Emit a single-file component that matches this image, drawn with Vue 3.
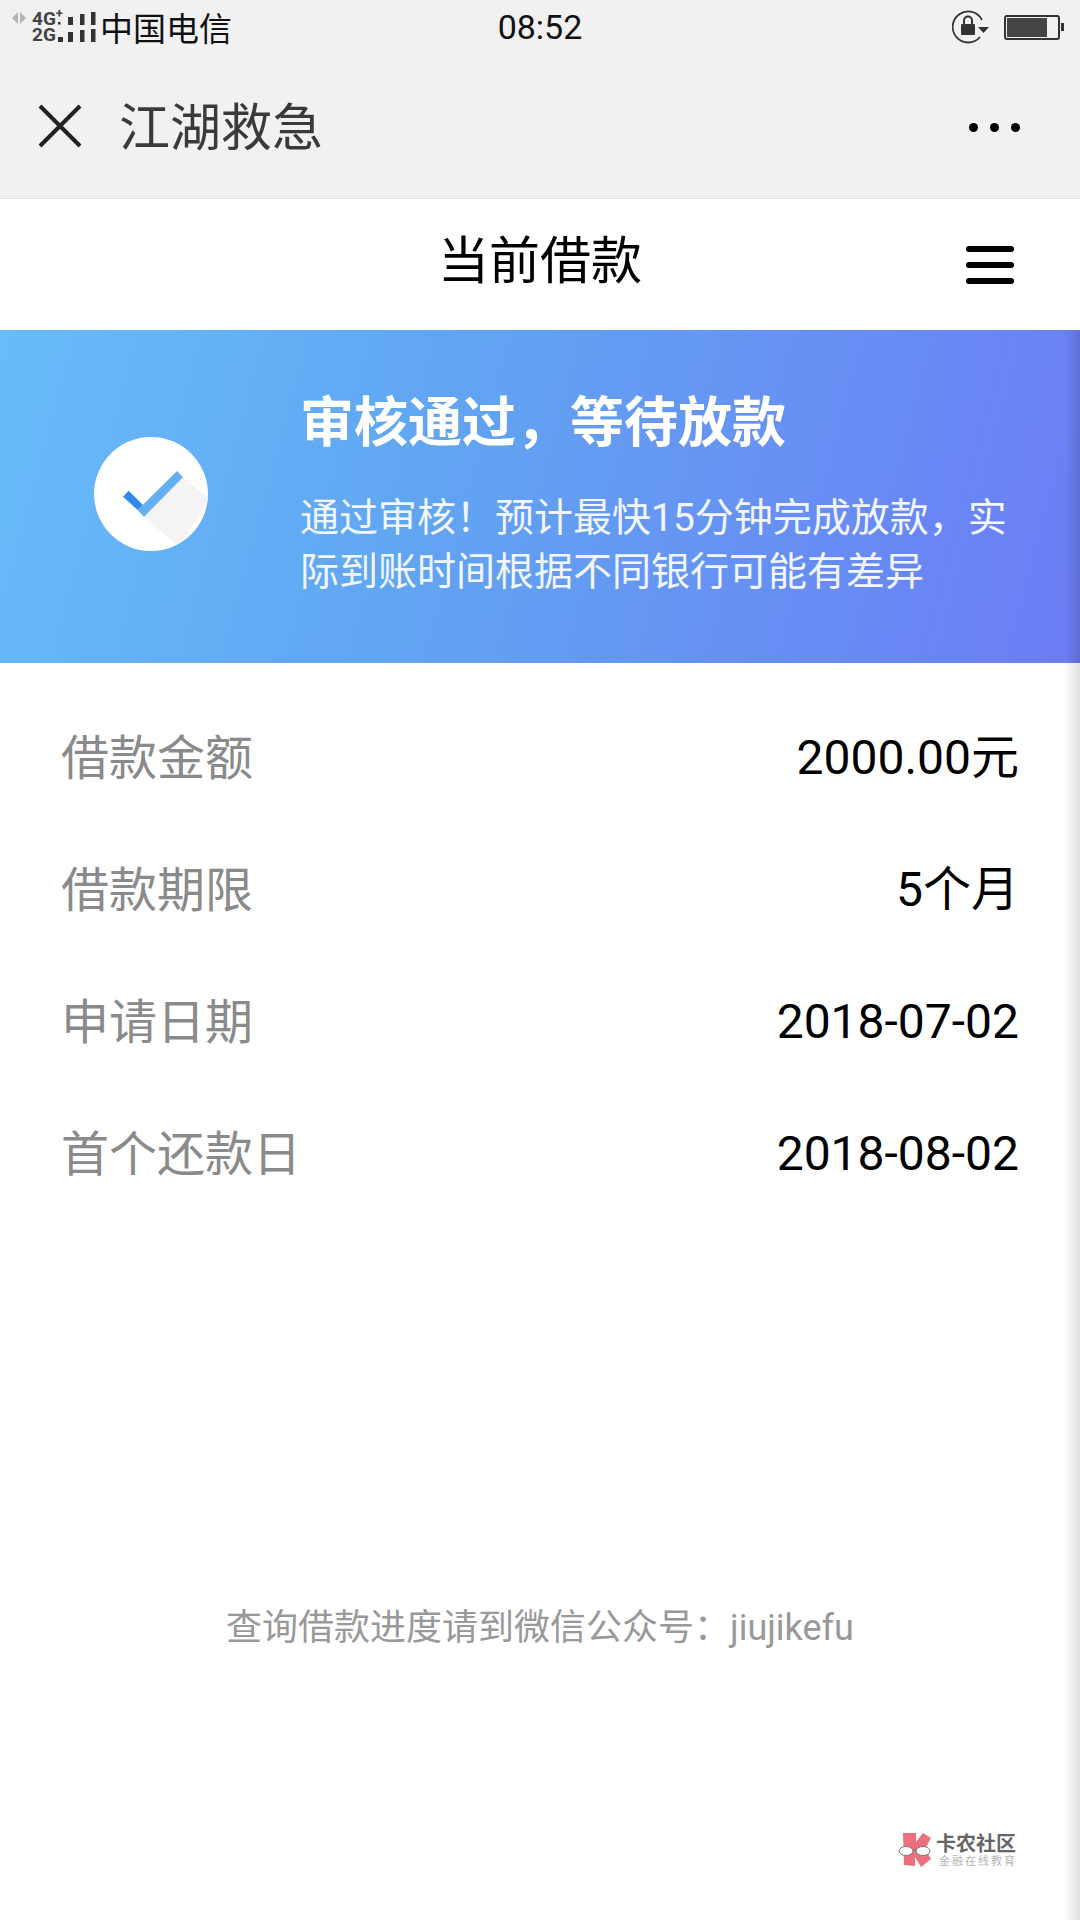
<template>
  <div class="page">
    <div class="status-bar">
      <svg class="updown" width="14" height="12" viewBox="0 0 14 12">
        <path d="M6 0v12L0 6zM8 0l6 6-6 6z" fill="#b5b5b5" />
      </svg>
      <div class="net">
        <span>4G<sup>+</sup></span>
        <span>2G</span>
      </div>
      <svg class="signal" width="39" height="31" viewBox="0 0 39 31">
        <path d="M1 10h2.500v2.500H1zM1 25h5v5H1z" fill="#333" />
        <path d="M11 5h5v8h-5zM11 20h5v10h-5z" fill="#333" />
        <path d="M23 2h4.500v11H23zM23 18h4.500v12H23z" fill="#333" />
        <path d="M34 0h4.500v13H34zM34 17h4.500v13H34z" fill="#333" />
      </svg>
      <span class="carrier">中国电信</span>
      <span class="clock">08:52</span>
      <div class="status-right">
        <svg width="38" height="34" viewBox="0 0 38 34">
          <path d="M28 27A15.500 15.500 0 1 1 30 10" fill="none" stroke="#333" stroke-width="1.800" />
          <path d="M26 17h11l-5.500 6z" fill="#333" />
          <rect x="9" y="14" width="14" height="11" rx="1" fill="#333" />
          <path d="M12 14v-3.500a4 4 0 0 1 8 0V14" fill="none" stroke="#333" stroke-width="2" />
        </svg>
        <div class="battery"><div class="battery-fill"></div></div>
        <div class="battery-cap"></div>
      </div>
    </div>

    <div class="nav-bar">
      <svg class="close" width="44" height="44" viewBox="0 0 44 44">
        <path d="M2 2l40 40M42 2L2 42" stroke="#222" stroke-width="4" fill="none" />
      </svg>
      <span class="nav-title">江湖救急</span>
      <div class="dots"><i></i><i></i><i></i></div>
    </div>

    <div class="title-bar">
      <span class="title">当前借款</span>
      <div class="menu"><i></i><i></i><i></i></div>
    </div>

    <div class="banner">
      <div class="check-wrap">
        <svg width="116" height="116" viewBox="0 0 116 116">
          <defs>
            <clipPath id="disc"><circle cx="58" cy="58" r="57" /></clipPath>
          </defs>
          <circle cx="58" cy="58" r="57" fill="#fff" />
          <path d="M51 80.700L90 41l26 22-30 48z" fill="#f4f4f5" clip-path="url(#disc)" />
          <path d="M35.600 54.700L30 60.700 44.600 74 50 69z" fill="#2f8ae8" />
          <path d="M84 35l6 6.300L51 80.700 44.600 74z" fill="#64aef2" />
        </svg>
      </div>
      <div class="banner-text">
        <div class="banner-title">审核通过，等待放款</div>
        <div class="banner-desc">通过审核！预计最快15分钟完成放款，实际到账时间根据不同银行可能有差异</div>
      </div>
    </div>

    <div class="rows">
      <div v-for="row in rows" :key="row.label" class="row">
        <span class="label">{{ row.label }}</span>
        <span class="value">{{ row.value }}</span>
      </div>
    </div>

    <div class="footer-note">查询借款进度请到微信公众号：jiujikefu</div>

    <div class="watermark">
      <svg width="34" height="36" viewBox="0 0 34 36">
        <path d="M5 1h13v9L25 1l8 5-6 11 6 10-10 8-6-10v9L6 33z" fill="#ec6f7e" />
        <ellipse cx="8" cy="19" rx="7" ry="4.500" fill="#fff" stroke="#777" stroke-width="1" />
        <ellipse cx="25" cy="19" rx="7" ry="4.500" fill="#fff" stroke="#777" stroke-width="1" />
        <path d="M15 18h3" stroke="#777" stroke-width="1" />
      </svg>
      <div class="mark-text">
        <div class="mark-name">卡农社区</div>
        <div class="mark-sub">金融在线教育</div>
      </div>
    </div>

    <div class="edge"></div>
  </div>
</template>

<script setup>
const rows = [
  { label: "借款金额", value: "2000.00元" },
  { label: "借款期限", value: "5个月" },
  { label: "申请日期", value: "2018-07-02" },
  { label: "首个还款日", value: "2018-08-02" },
];
</script>

<style>
html,
body {
  margin: 0;
  background: #fff;
}
</style>

<style scoped>
.page {
  position: relative;
  width: 1080px;
  height: 1920px;
  overflow: hidden;
  background: #fff;
  font-family: Roboto, "Noto Sans CJK SC", sans-serif;
}

.status-bar {
  position: relative;
  display: flex;
  align-items: center;
  height: 54px;
  padding: 0 16px 0 12px;
  background: #f1f1f1;
}

.updown {
  align-self: flex-start;
  margin-top: 12px;
  margin-right: 6px;
}

.net {
  display: flex;
  flex-direction: column;
  width: 25px;
  font-size: 19px;
  line-height: 16px;
  font-weight: 700;
  color: #444;
  white-space: nowrap;
}

.net sup {
  font-size: 13px;
  line-height: 0;
  vertical-align: 7px;
}

.carrier {
  margin-left: 4px;
  font-size: 33px;
  color: #111;
}

.clock {
  position: absolute;
  left: 0;
  right: 0;
  text-align: center;
  font-size: 34px;
  color: #111;
}

.status-right {
  display: flex;
  align-items: center;
  margin-left: auto;
}

.battery {
  width: 50px;
  height: 19px;
  margin-left: 14px;
  border: 2px solid #333;
  border-radius: 3px;
  padding: 1px;
}

.battery-fill {
  width: 40px;
  height: 19px;
  background: #444;
}

.battery-cap {
  width: 3px;
  height: 8px;
  margin-left: 1px;
  background: #333;
}

.nav-bar {
  display: flex;
  align-items: center;
  height: 145px;
  padding: 0 60px 0 38px;
  background: #f1f1f1;
  border-bottom: 1px solid #e3e3e3;
  box-sizing: border-box;
}

.nav-title {
  margin-left: 37px;
  margin-bottom: 4px;
  font-size: 51px;
  color: #3a3a3a;
}

.dots {
  display: flex;
  gap: 12px;
  margin-top: 3px;
  margin-left: auto;
}

.dots i {
  width: 9px;
  height: 9px;
  border-radius: 50%;
  background: #000;
}

.title-bar {
  position: relative;
  display: flex;
  align-items: center;
  justify-content: center;
  height: 131px;
}

.title {
  margin-bottom: 16px;
  font-size: 51px;
  color: #000;
}

.menu {
  position: absolute;
  right: 66px;
  top: 47px;
  display: flex;
  flex-direction: column;
  gap: 10px;
}

.menu i {
  width: 48px;
  height: 6px;
  border-radius: 3px;
  background: #000;
}

.banner {
  display: flex;
  align-items: center;
  height: 333px;
  background: linear-gradient(105deg, #68bcfb 0%, #61a5f2 40%, #6c7cf5 100%);
  color: #fff;
}

.check-wrap {
  display: flex;
  width: 300px;
  margin-bottom: 5px;
  padding-left: 93px;
  box-sizing: border-box;
}

.banner-text {
  width: 720px;
  margin-bottom: 5px;
}

.banner-title {
  font-size: 54px;
  font-weight: 700;
  line-height: 70px;
}

.banner-desc {
  margin-top: 32px;
  font-size: 39px;
  line-height: 54px;
  color: #f2f6ff;
}

.rows {
  padding: 24px 61px 0;
}

.row {
  display: flex;
  align-items: center;
  justify-content: space-between;
  height: 132px;
}

.label {
  padding-top: 12px;
  font-size: 48px;
  line-height: 64px;
  color: #8a8a8a;
}

.value {
  padding-top: 10px;
  font-size: 48px;
  line-height: 64px;
  color: #000;
}

.footer-note {
  margin-top: 388px;
  text-align: center;
  font-size: 36px;
  line-height: 50px;
  color: #999;
}

.watermark {
  position: absolute;
  right: 63px;
  bottom: 52px;
  display: flex;
  align-items: center;
  gap: 4px;
}

.mark-text {
  display: flex;
  flex-direction: column;
}

.mark-name {
  font-size: 20px;
  line-height: 22px;
  font-weight: 700;
  color: #666;
}

.mark-sub {
  margin-left: 3px;
  font-size: 11px;
  line-height: 13px;
  letter-spacing: 2px;
  color: #b5b5b5;
}

.edge {
  position: absolute;
  top: 330px;
  right: 0;
  bottom: 0;
  width: 16px;
  background: linear-gradient(90deg, rgba(0, 0, 0, 0), rgba(0, 0, 0, 0.12));
  pointer-events: none;
}
</style>
